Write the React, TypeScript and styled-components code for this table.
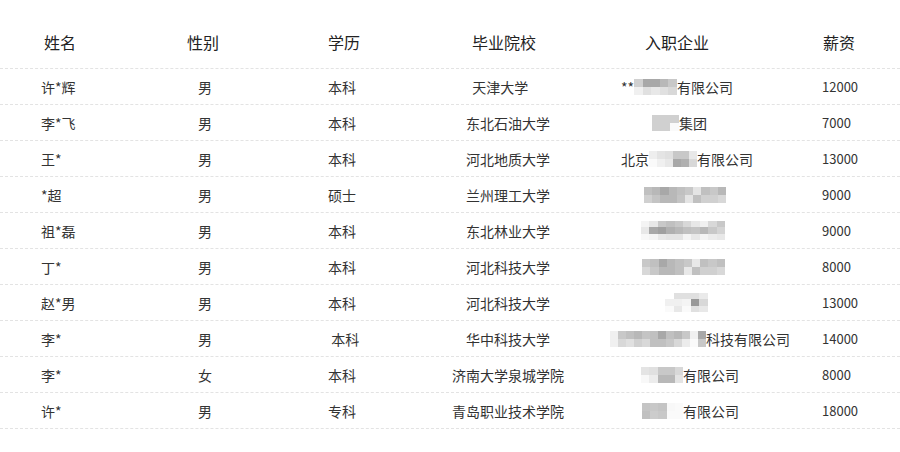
import React from "react";
import styled, { createGlobalStyle } from "styled-components";

const Global = createGlobalStyle`
  html, body { margin: 0; padding: 0; background: #fff; }
  body { font-family: "Noto Sans CJK SC", "Noto Sans", sans-serif; color: #333; }
`;

const COLS = "120px 170px 108px 212px 170px 120px";

const Table = styled.div`
  width: 900px;
  display: flex;
  flex-direction: column;
`;

const HeaderRow = styled.div`
  display: grid;
  grid-template-columns: ${COLS};
  height: 69px;
  padding-top: 15px;
  box-sizing: border-box;
  align-items: center;
  border-bottom: 1px dashed #e3e3e3;
`;

const Row = styled.div`
  display: grid;
  grid-template-columns: ${COLS};
  height: 36px;
  box-sizing: border-box;
  align-items: center;
  border-bottom: 1px dashed #e3e3e3;
`;

const HeadCell = styled.div<{ $align?: string; $pl?: number; $pr?: number }>`
  font-size: 16px;
  line-height: 20px;
  color: #222;
  text-align: ${(p) => p.$align || "center"};
  padding-left: ${(p) => p.$pl || 0}px;
  padding-right: ${(p) => p.$pr || 0}px;
`;

const Cell = styled.div<{ $align?: string; $pl?: number; $size?: number }>`
  font-size: ${(p) => p.$size || 14}px;
  line-height: 20px;
  color: #333;
  white-space: pre;
  text-align: ${(p) => p.$align || "left"};
  padding-left: ${(p) => p.$pl || 0}px;
`;

const Company = styled.div<{ $pl: number }>`
  display: flex;
  align-items: center;
  font-size: 14px;
  line-height: 20px;
  color: #333;
  white-space: pre;
  padding-left: ${(p) => p.$pl}px;
  min-width: 0;
  overflow: visible;
  & > * { flex-shrink: 0; }
`;

const MosaicGrid = styled.div<{ $cols: number; $rows: number; $h: number }>`
  display: grid;
  grid-template-columns: repeat(${(p) => p.$cols}, 1fr);
  grid-template-rows: repeat(${(p) => p.$rows}, 1fr);
  height: ${(p) => p.$h}px;
  flex-shrink: 0;
`;

const Block = styled.div<{ $g: string }>`
  background: #${(p) => p.$g}${(p) => p.$g}${(p) => p.$g};
`;

type Mos = { w: number; h: number; rows: string[][] };
type Part = string | Mos;

const Mosaic = ({ m }: { m: Mos }) => (
  <MosaicGrid $cols={m.rows[0].length} $rows={m.rows.length} $h={m.h} style={{ width: m.w }}>
    {m.rows.flat().map((g, i) => (
      <Block key={i} $g={g} />
    ))}
  </MosaicGrid>
);

type RowData = {
  name: string;
  sex: string;
  edu: string;
  school: string;
  compX: number;
  company: Part[];
  pay: string;
};

const data: RowData[] = [
  {
    name: "许*辉", sex: "男", edu: "本科", school: "天津大学     ", compX: 11,
    company: ["**", { w: 43, h: 16, rows: [["d0", "a8", "a8", "b8", "c8"], ["f0", "e0", "e8", "e0", "d8"]] }, "有限公司"],
    pay: "12000",
  },
  {
    name: "李*飞", sex: "男", edu: "本科", school: "东北石油大学", compX: 42,
    company: [{ w: 27, h: 16, rows: [["d0", "d0", "d0"], ["d0", "d0", "fa"]] }, "集团"],
    pay: "7000",
  },
  {
    name: "王*", sex: "男", edu: "本科", school: "河北地质大学", compX: 11,
    company: ["北京", { w: 48, h: 16, rows: [["ee", "e4", "e0", "c8", "c8", "e8"], ["fa", "f0", "e8", "a8", "b0", "d8"]] }, "有限公司"],
    pay: "13000",
  },
  {
    name: "*超", sex: "男", edu: "硕士", school: "兰州理工大学", compX: 34,
    company: [{ w: 82, h: 16, rows: [["c0", "b8", "a8", "b8", "c0", "c8", "e4", "c0", "c8", "b8"], ["d0", "c4", "b8", "b8", "c4", "e4", "c0", "d0", "d0", "d8"]] }],
    pay: "9000",
  },
  {
    name: "祖*磊", sex: "男", edu: "本科", school: "东北林业大学", compX: 31,
    company: [{ w: 84, h: 20, rows: [["f4", "e8", "c8", "c0", "c8", "d8", "e8", "f0", "d8", "c8"], ["e8", "a8", "a0", "b0", "b8", "c0", "c4", "b8", "c8", "d4"], ["f8", "f4", "e8", "e4", "e4", "f4", "e8", "f4", "ec", "e8"]] }],
    pay: "9000",
  },
  {
    name: "丁*", sex: "男", edu: "本科", school: "河北科技大学", compX: 32,
    company: [{ w: 83, h: 16, rows: [["c8", "c0", "a8", "b8", "c0", "c8", "e8", "c0", "c8", "c0"], ["d8", "c8", "b8", "b8", "c0", "e8", "c0", "d0", "d0", "d8"]] }],
    pay: "8000",
  },
  {
    name: "赵*男", sex: "男", edu: "本科", school: "河北科技大学", compX: 55,
    company: [{ w: 43, h: 20, rows: [["ff", "e0", "e0", "e0", "ea"], ["f0", "f0", "f4", "98", "d8"], ["fa", "e8", "fa", "e0", "e8"]] }],
    pay: "13000",
  },
  {
    name: "李*", sex: "男", edu: " 本科", school: "华中科技大学", compX: 0,
    company: [{ w: 96, h: 16, rows: [["f0", "c8", "c0", "b8", "c4", "c0", "a8", "c0", "b8", "c8", "f0", "a8"], ["f0", "d8", "e0", "d0", "d8", "c0", "c0", "c8", "d8", "ec", "fa", "c8"]] }, "科技有限公司"],
    pay: "14000",
  },
  {
    name: "李*", sex: "女", edu: "本科", school: "济南大学泉城学院", compX: 31,
    company: [{ w: 42, h: 16, rows: [["e4", "e0", "c8", "c8", "d8"], ["f8", "ec", "b8", "b8", "e4"]] }, "有限公司"],
    pay: "8000",
  },
  {
    name: "许*", sex: "男", edu: "专科", school: "青岛职业技术学院", compX: 32,
    company: [{ w: 41, h: 16, rows: [["c4", "c8", "c4", "f8", "fa"], ["c0", "cc", "c8", "fa", "fa"]] }, "有限公司"],
    pay: "18000",
  },
];

export default function App() {
  return (
    <>
      <Global />
      <Table>
        <HeaderRow>
          <HeadCell>姓名</HeadCell>
          <HeadCell $pr={4}>性别</HeadCell>
          <HeadCell>学历</HeadCell>
          <HeadCell>毕业院校</HeadCell>
          <HeadCell $align="left" $pl={35}>入职企业</HeadCell>
          <HeadCell $align="left" $pl={43}>薪资</HeadCell>
        </HeaderRow>
        {data.map((r, i) => (
          <Row key={i}>
            <Cell $pl={41}>{r.name}</Cell>
            <Cell $align="center">{r.sex}</Cell>
            <Cell $pl={38}>{r.edu}</Cell>
            <Cell $align="center" $pl={8}>{r.school}</Cell>
            <Company $pl={r.compX}>
              {r.company.map((p, j) =>
                typeof p === "string" ? <span key={j}>{p}</span> : <Mosaic key={j} m={p} />
              )}
            </Company>
            <Cell $pl={42} $size={13}>{r.pay}</Cell>
          </Row>
        ))}
      </Table>
    </>
  );
}
